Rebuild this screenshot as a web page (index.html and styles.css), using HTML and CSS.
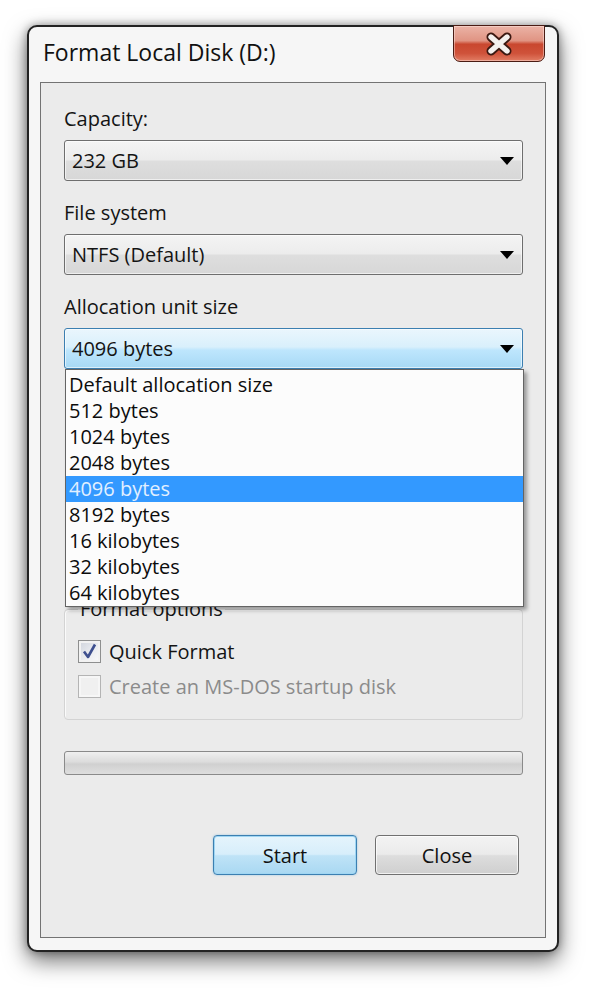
FILE: index.html
```html
<!DOCTYPE html>
<html>
<head>
<meta charset="utf-8">
<link rel="stylesheet" href="styles.css">
</head>
<body>
<div class="window">
  <div class="titlebar">
    <span class="title">Format Local Disk (D:)</span>
    <div class="close-x">
      <svg width="32" height="28" viewBox="-16 -14 32 28">
        <path d="M-8 -7 L8 7 M8 -7 L-8 7" stroke="#3b1811" stroke-width="9" stroke-linecap="round" fill="none"/>
        <path d="M-8 -7 L8 7 M8 -7 L-8 7" stroke="#f4f0ee" stroke-width="5.4" stroke-linecap="round" fill="none"/>
      </svg>
    </div>
  </div>
  <div class="panel">
    <div class="label">Capacity:</div>
    <div class="combo"><span>232 GB</span><span class="arrow"></span></div>
    <div class="label">File system</div>
    <div class="combo"><span>NTFS (Default)</span><span class="arrow"></span></div>
    <div class="label">Allocation unit size</div>
    <div class="combo-wrap">
      <div class="combo focused"><span>4096 bytes</span><span class="arrow"></span></div>
      <ul class="dropdown">
        <li>Default allocation size</li>
        <li>512 bytes</li>
        <li>1024 bytes</li>
        <li>2048 bytes</li>
        <li class="selected">4096 bytes</li>
        <li>8192 bytes</li>
        <li>16 kilobytes</li>
        <li>32 kilobytes</li>
        <li>64 kilobytes</li>
      </ul>
    </div>
    <div class="spacer"></div>
    <fieldset class="group">
      <legend>Format options</legend>
      <div class="check">
        <span class="box checked">
          <svg width="21" height="21" viewBox="0 0 21 21"><path d="M5 10.5 L9 16 L16 3.5" stroke="#3d4f8f" stroke-width="2.6" fill="none" stroke-linejoin="round"/></svg>
        </span>
        <span>Quick Format</span>
      </div>
      <div class="check disabled">
        <span class="box"></span>
        <span>Create an MS-DOS startup disk</span>
      </div>
    </fieldset>
    <div class="progress"></div>
    <div class="buttons">
      <button class="btn default">Start</button>
      <button class="btn">Close</button>
    </div>
  </div>
</div>
</body>
</html>
```

FILE: styles.css
```css
html, body {
  margin: 0;
  padding: 0;
}
body {
  background: #ffffff;
  font-family: "Open Sans", "Noto Sans", sans-serif;
  font-size: 20px;
  color: #141414;
  width: 596px;
  height: 990px;
  overflow: hidden;
}
.window {
  margin: 25px 0 0 27px;
  width: 532px;
  height: 927px;
  box-sizing: border-box;
  border: 2px solid #232323;
  border-radius: 10px;
  background: #f6f6f6;
  box-shadow: 0 9px 22px rgba(0, 0, 0, 0.55), 0 0 9px rgba(0, 0, 0, 0.35);
  display: flex;
  flex-direction: column;
}
.titlebar {
  flex: none;
  height: 55px;
  display: flex;
  justify-content: space-between;
  align-items: flex-start;
  padding-left: 14px;
}
.title {
  margin-top: 9px;
  line-height: 32px;
  font-size: 23px;
  color: #111;
}
.close-x {
  width: 92px;
  height: 37px;
  box-sizing: border-box;
  margin: -2px 12px 0 0;
  border: 1.5px solid #4a1c14;
  border-radius: 0 0 7px 7px;
  background: linear-gradient(#ebb3a6 0%, #e09483 42%, #c9472f 52%, #cf523a 78%, #e27d64 100%);
  box-shadow: inset 0 0 0 1px rgba(255, 235, 230, 0.45);
  display: flex;
  align-items: center;
  justify-content: center;
}
.panel {
  flex: 1;
  margin: 0 11px 12px;
  border: 1px solid #737373;
  background: #ebebeb;
  padding: 22px 22px 0 23px;
  display: flex;
  flex-direction: column;
}
.label {
  line-height: 28px;
  margin-bottom: 7px;
}
.combo {
  height: 41px;
  box-sizing: border-box;
  border: 1px solid #6e6e6e;
  border-radius: 3px;
  padding: 0 8px 0 7px;
  display: flex;
  align-items: center;
  justify-content: space-between;
  background: linear-gradient(#f4f4f4 0%, #ececec 48%, #dedede 52%, #d7d7d7 100%);
  box-shadow: inset 0 0 0 1px rgba(255, 255, 255, 0.6);
  margin-bottom: 18px;
  line-height: 28px;
}
.arrow {
  width: 0;
  height: 0;
  border-left: 7.5px solid transparent;
  border-right: 7.5px solid transparent;
  border-top: 8px solid #000;
}
.combo-wrap {
  position: relative;
  flex: none;
}
.combo-wrap .combo {
  margin-bottom: 0;
}
.combo.focused {
  border-color: #3c7fb1;
  background: linear-gradient(#eaf6fd 0%, #d9f0fc 46%, #bee6fd 54%, #a7d9f5 100%);
}
.dropdown {
  position: absolute;
  top: 100%;
  left: 1px;
  width: 459px;
  box-sizing: border-box;
  margin: 0;
  padding: 2px 0 0;
  list-style: none;
  background: #fcfcfc;
  border: 1px solid #646464;
  box-shadow: 3px 3px 4px rgba(0, 0, 0, 0.35);
  z-index: 5;
}
.dropdown li {
  height: 26px;
  line-height: 26px;
  padding-left: 3px;
  color: #0c0c0c;
}
.dropdown li.selected {
  background: #3399ff;
  color: #e2f0ff;
}
.spacer {
  flex: none;
  height: 226px;
}
.group {
  margin: 0;
  padding: 0 13px 15px;
  border: 1px solid #d3d3d3;
  border-radius: 4px;
  box-shadow: inset 1px 1px 0 #fafafa;
}
.group legend {
  padding: 0 2px;
  line-height: 28px;
  margin-bottom: 11px;
}
.check {
  height: 35px;
  display: flex;
  align-items: center;
  gap: 8px;
}
.box {
  width: 23px;
  height: 23px;
  box-sizing: border-box;
  border: 1px solid #8e8f8f;
  background: linear-gradient(135deg, #cfd3dc 0%, #eceef2 60%, #fafafa 100%);
  box-shadow: inset 0 0 0 2px #f2f2f2;
  display: flex;
  align-items: center;
  justify-content: center;
}
.check.disabled {
  color: #8b8b8b;
}
.check.disabled .box {
  border-color: #b4b4b4;
  background: #f0f0f0;
  box-shadow: inset 0 0 0 2px #f6f6f6;
}
.progress {
  flex: none;
  margin-top: 31px;
  height: 24px;
  box-sizing: border-box;
  border: 1px solid #8a8a8a;
  border-radius: 3px;
  background: linear-gradient(#f0f0f0 0%, #dcdcdc 45%, #d0d0d0 55%, #dedede 100%);
}
.buttons {
  flex: none;
  margin-top: 60px;
  display: flex;
  justify-content: flex-end;
  gap: 18px;
  padding-right: 4px;
}
.btn {
  width: 144px;
  height: 40px;
  box-sizing: border-box;
  font: inherit;
  color: #111;
  border: 1px solid #707070;
  border-radius: 4px;
  background: linear-gradient(#f3f3f3 0%, #ebebeb 48%, #dddddd 52%, #cfcfcf 100%);
  box-shadow: inset 0 0 0 1px rgba(255, 255, 255, 0.7);
  padding: 0;
}
.btn.default {
  border-color: #3c7fb1;
  background: linear-gradient(#e5f4fc 0%, #d7eefb 48%, #bfe3f7 52%, #a9d8f2 100%);
  box-shadow: inset 0 0 0 1px #9fd6f3, 0 0 2px rgba(60, 160, 220, 0.5);
}
```
